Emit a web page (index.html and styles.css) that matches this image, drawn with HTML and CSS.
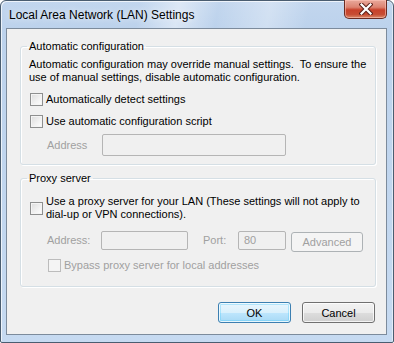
FILE: index.html
```html
<!DOCTYPE html>
<html>
<head>
  <title>Local Area Network (LAN) Settings</title>
  <meta charset="UTF-8">
  <link rel="stylesheet" href="styles.css">
</head>
<body>
  <div class="window">
    <div class="titlebar">
      <span class="title">Local Area Network (LAN) Settings</span>
      <button class="close-btn" type="button" aria-label="Close">
        <svg width="14" height="12" viewBox="0 0 14 12">
          <path d="M2.5 1.5 L11.5 10.5 M11.5 1.5 L2.5 10.5" stroke="#5a2019" stroke-width="4.2" stroke-linecap="square"/>
          <path d="M2.5 1.5 L11.5 10.5 M11.5 1.5 L2.5 10.5" stroke="#fff" stroke-width="2.2" stroke-linecap="square"/>
        </svg>
      </button>
    </div>

    <div class="client">
      <!-- Automatic configuration -->
      <fieldset class="group group-auto">
        <legend>Automatic configuration</legend>
        <p class="note">Automatic configuration may override manual settings.&nbsp; To ensure the<br>use of manual settings, disable automatic configuration.</p>
        <label class="check"><span class="box"></span>Automatically detect settings</label>
        <label class="check check-second"><span class="box"></span>Use automatic configuration script</label>
        <div class="field-row is-disabled">
          <span class="field-label">Address</span>
          <span class="textbox textbox-script"></span>
        </div>
      </fieldset>

      <!-- Proxy server -->
      <fieldset class="group group-proxy">
        <legend>Proxy server</legend>
        <label class="check check-multi"><span class="box"></span><span>Use a proxy server for your LAN (These settings will not apply to<br>dial-up or VPN connections).</span></label>
        <div class="field-row proxy-row is-disabled">
          <span class="field-label">Address:</span>
          <span class="textbox textbox-addr"></span>
          <span class="port-label">Port:</span>
          <span class="textbox textbox-port">80</span>
          <button class="btn btn-advanced" type="button" disabled>Advanced</button>
        </div>
        <label class="check check-bypass is-disabled"><span class="box"></span>Bypass proxy server for local addresses</label>
      </fieldset>

      <div class="footer">
        <button class="btn btn-default" type="button">OK</button>
        <button class="btn" type="button">Cancel</button>
      </div>
    </div>
  </div>
</body>
</html>
```

FILE: styles.css
```css
:root {
  --ui-font: "Liberation Sans", Arial, sans-serif;
  --face: #f0f0f0;
  --text: #000;
  --disabled-text: #a0a0a0;
  --group-border: #d5dfe5;
  --frame-edge: #4a5d70;
}
html, body { margin: 0; padding: 0; }
body {
  width: 394px;
  height: 343px;
  font-family: var(--ui-font);
  font-size: 11px;
  color: var(--text);
  background: #fff;
}

/* === window frame === */
.window {
  width: 394px;
  height: 343px;
  box-sizing: border-box;
  border: 1px solid var(--frame-edge);
  border-radius: 6px 6px 2px 2px;
  padding: 0 6px 7px 5px;
  display: flex;
  flex-direction: column;
  background:
    linear-gradient(100deg, rgba(255,255,255,0) 35%, rgba(255,255,255,0.45) 45%, rgba(255,255,255,0) 55%, rgba(255,255,255,0.3) 68%, rgba(255,255,255,0) 78%) 0 0 / 100% 28px no-repeat,
    linear-gradient(180deg, #c2d6ee 0, #bcd2ec 28px, #c6daf1 100%);
  box-shadow: inset 1px 1px 0 rgba(255,255,255,0.7), inset -1px 0 0 rgba(255,255,255,0.5);
}
.titlebar {
  height: 27px;
  display: flex;
  align-items: flex-start;
  justify-content: space-between;
  flex: none;
}
.title {
  margin: 6px 0 0 3px;
  font-size: 12px;
  line-height: 16px;
  color: #000;
  text-shadow: 0 0 6px rgba(255,255,255,0.9);
}
.close-btn {
  width: 43px;
  height: 19px;
  margin: -1px 0 0 0;
  padding: 0;
  border: 1px solid #6a2b22;
  border-top: none;
  border-radius: 0 0 5px 5px;
  background: linear-gradient(180deg, #e9a99b 0, #dc8371 40%, #c8412a 55%, #c74c33 80%, #d98a69 100%);
  box-shadow: inset 0 0 0 1px rgba(255,200,190,0.55);
  display: flex;
  align-items: center;
  justify-content: center;
  cursor: pointer;
}
.close-btn svg { display: block; }

/* === client area === */
.client {
  flex: 1;
  background: var(--face);
  border: 1px solid #7c8b9c;
  padding: 10px 10px 0 13px;
  display: flex;
  flex-direction: column;
  white-space: nowrap;
}

/* group boxes */
.group {
  margin: 0;
  padding: 0 8px 0 8px;
  border: 1px solid var(--group-border);
  border-radius: 3px;
  box-shadow: 1px 1px 0 #fff inset, 1px 1px 0 #fff;
  min-width: 0;
}
.group legend {
  padding: 0 2px;
  margin-left: -2px;
  line-height: 14px;
}
.group-auto { height: 126px; box-sizing: border-box; padding-top: 5px; }
.group-proxy { height: 116px; box-sizing: border-box; margin-top: 6px; padding-top: 10px; }

.note {
  margin: 0;
  line-height: 13px;
}

/* checkboxes */
.check {
  display: flex;
  align-items: center;
  gap: 3px;
  height: 16px;
  line-height: 13px;
  margin-top: 7px;
}
.check-second { margin-top: 6px; }
.check-multi { height: auto; margin-top: 0; }
.box {
  flex: none;
  width: 11px;
  height: 11px;
  border: 1px solid #8e8f8f;
  background: linear-gradient(135deg, #dcdcdc 0, #f2f2f2 60%, #fefefe 100%);
  box-shadow: inset 0 0 0 1px #f4f4f4;
  margin-left: 1px;
}
.check-bypass { margin: 5px 0 0 18px; }
.is-disabled { color: var(--disabled-text); }
.is-disabled .box, .check-bypass .box {
  border-color: #bcbcbc;
  background: #f4f4f4;
  box-shadow: none;
}

/* text fields */
.field-row {
  display: flex;
  align-items: center;
  margin: 5px 0 0 18px;
}
.field-label { width: 55px; }
.textbox {
  box-sizing: border-box;
  border: 1px solid #b5b5b5;
  border-radius: 2px;
  background: var(--face);
  color: var(--disabled-text);
  padding: 0 0 0 5px;
}
.textbox-script { width: 184px; height: 22px; }
.proxy-row { margin-top: 10px; align-items: flex-start; }
.proxy-row .field-label { width: 54px; line-height: 18px; }
.textbox-addr { width: 87px; height: 19px; }
.port-label { margin-left: 15px; width: 35px; line-height: 18px; }
.textbox-port { width: 48px; height: 19px; line-height: 17px; }

/* buttons */
.btn {
  box-sizing: border-box;
  width: 73px;
  height: 21px;
  padding: 0;
  font-family: var(--ui-font);
  font-size: 11px;
  color: #000;
  border: 1px solid #707070;
  border-radius: 3px;
  background: linear-gradient(180deg, #f2f2f2 0, #ebebeb 50%, #dddddd 51%, #cfcfcf 100%);
  box-shadow: inset 0 0 0 1px rgba(255,255,255,0.75);
}
.btn:disabled {
  color: var(--disabled-text);
  border-color: #adb2b5;
  background: #f4f4f4;
  box-shadow: none;
}
.btn-advanced { width: 72px; height: 20px; margin: 1px 0 0 5px; }
.btn-default {
  border-color: #3c7fb1;
  background: linear-gradient(180deg, #eaf6fd 0, #d9f0fc 50%, #bee6fd 51%, #a7d9f5 100%);
  box-shadow: inset 0 0 0 1px rgba(255,255,255,0.8), inset 0 0 0 2px rgba(75,200,250,0.35);
}

.footer {
  display: flex;
  justify-content: flex-end;
  gap: 11px;
  margin-top: 15px;
  padding-right: 1px;
}
```
